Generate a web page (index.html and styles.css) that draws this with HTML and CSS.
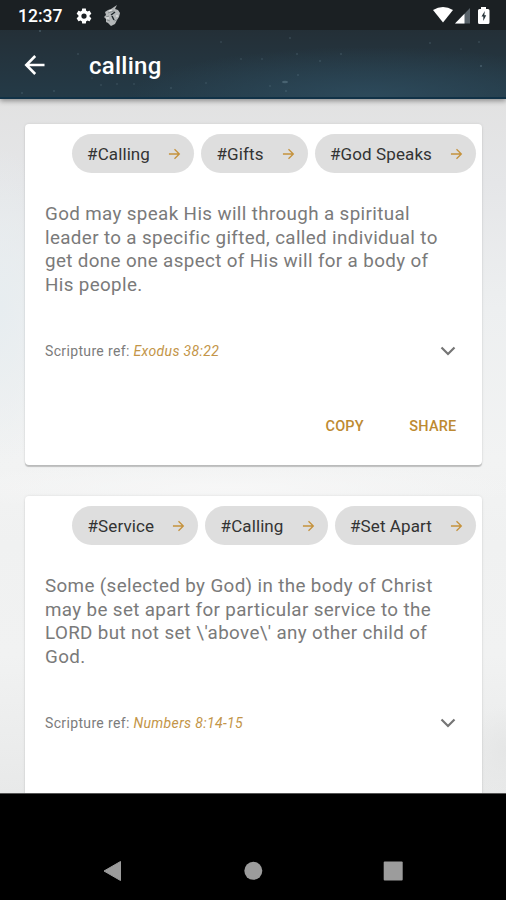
FILE: index.html
```html
<!DOCTYPE html>
<html lang="en">
<head>
<meta charset="utf-8">
<title>calling</title>
<link rel="stylesheet" href="styles.css">
</head>
<body>
<svg class="defs" width="0" height="0" aria-hidden="true">
  <symbol id="arrow" viewBox="0 0 14 14"><path d="M1 7H12M7 1.8L12.2 7L7 12.2" fill="none" stroke="currentColor" stroke-width="1.4"/></symbol>
  <symbol id="chevron" viewBox="0 0 16 10"><path d="M1.5 1.5L8 8L14.500 1.500" fill="none" stroke="currentColor" stroke-width="2.200"/></symbol>
</svg>
<div class="screen">
  <header class="top">
    <svg class="stars" viewBox="0 0 506 69" aria-hidden="true">
      <g fill="#7895a3" opacity=".4">
        <circle cx="40" cy="1" r="1"/><circle cx="78" cy="24" r=".8"/><circle cx="54" cy="61" r=".8"/><circle cx="22" cy="63" r=".8"/><circle cx="101" cy="55" r=".7"/><circle cx="117" cy="54" r=".7"/><circle cx="134" cy="54" r=".7"/><circle cx="92" cy="48" r=".6"/>
        <circle cx="171" cy="58" r=".8"/><circle cx="206" cy="53" r=".7"/><circle cx="221" cy="12" r=".7"/><circle cx="241" cy="29" r=".7"/><circle cx="262" cy="29" r=".7"/><circle cx="290" cy="8" r=".8"/><circle cx="297" cy="24" r=".8"/><circle cx="320" cy="31" r=".8"/><circle cx="341" cy="24" r=".8"/><circle cx="298" cy="45" r=".8"/><circle cx="270" cy="56" r=".7"/><circle cx="286" cy="61" r=".8"/><ellipse cx="285" cy="52" rx="3" ry="1.300"/>
        <circle cx="430" cy="13" r=".8"/><circle cx="461" cy="19" r=".6"/><circle cx="479" cy="12" r=".8"/><circle cx="471" cy="-1" r="1"/><circle cx="481" cy="36" r="1"/>
      </g>
    </svg>
    <div class="status">
      <span class="time">12:37</span>
      <svg class="gear" width="18" height="18" viewBox="0 0 24 24"><path fill="#fff" d="M19.430 12.980c.04-.32.07-.64.07-.98s-.03-.66-.07-.98l2.110-1.650c.19-.15.24-.42.12-.64l-2-3.460c-.12-.22-.39-.3-.61-.22l-2.490 1c-.52-.4-1.080-.73-1.690-.98l-.38-2.650C14.460 2.180 14.250 2 14 2h-4c-.25 0-.46.18-.49.42l-.38 2.650c-.61.25-1.170.59-1.690.98l-2.490-1c-.23-.09-.49 0-.61.22l-2 3.460c-.13.22-.07.49.12.64l2.110 1.650c-.04.32-.07.65-.07.98s.03.66.07.98l-2.110 1.650c-.19.15-.24.42-.12.64l2 3.460c.12.22.39.3.61.22l2.490-1c.52.4 1.080.73 1.690.98l.38 2.650c.03.24.24.42.49.42h4c.25 0 .46-.18.49-.42l.38-2.650c.61-.25 1.170-.59 1.690-.98l2.490 1c.23.09.49 0 .61-.22l2-3.460c.12-.22.07-.49-.12-.64zM12 15.500A3.500 3.500 0 1 1 12 8.500a3.500 3.500 0 0 1 0 7z"/></svg>
      <svg class="debug" width="18" height="22" viewBox="0 0 18 22">
        <path d="M2 7L5 5L8 4L14 0L12 4L15 5L17 8L16 12L14 15L12 19L8 21L5 18L3 17L3 14L1 12L3 10Z" fill="#b5b8b9"/>
        <path d="M5 8L11 6M3 12L6 11M4 15L7 16M11 16L14 15" stroke="#7a8082" stroke-width=".8"/>
        <path d="M12 7L8 10M9 11L11 15" fill="none" stroke="#22292d" stroke-width="1.500"/>
        <path d="M6 6L9 5M3 13L6 13M13 11L15 11" stroke="#eee" stroke-width="1"/>
      </svg>
      <span class="grow"></span>
      <svg width="60" height="20" viewBox="0 0 60 20">
        <path d="M1 4Q11 -2 21 4L11 16.500Z" fill="#fff"/>
        <path d="M23 17.500L38 2V17.500Z" fill="#59636a"/><path d="M23 17.500L32.500 7.700V17.500Z" fill="#fff"/>
        <path d="M49 1H54V3H56Q57.500 3 57.500 4.500V16.500Q57.500 18 56 18H47.500Q46 18 46 16.500V4.500Q46 3 47.500 3H49Z" fill="#fff"/>
        <path d="M52.800 5L49.500 10.500H51.300V15L54.200 9.300H52.300Z" fill="#263238"/>
      </svg>
    </div>
    <div class="bar">
      <svg width="22" height="22" viewBox="0 0 22 22"><path d="M20.500 11H3M11.200 2L2.300 11L11.200 20" fill="none" stroke="#fff" stroke-width="2.600"/></svg>
      <h1>calling</h1>
    </div>
  </header>
  <main>
    <article class="card">
      <div class="chips">
        <a class="chip">#Calling<svg><use href="#arrow"/></svg></a>
        <a class="chip">#Gifts<svg><use href="#arrow"/></svg></a>
        <a class="chip">#God Speaks<svg><use href="#arrow"/></svg></a>
      </div>
      <p class="text">God may speak His will through a spiritual<br>leader to a specific gifted, called individual to<br>get done one aspect of His will for a body of<br>His people.</p>
      <div class="ref"><span>Scripture ref: <em>Exodus 38:22</em></span><svg><use href="#chevron"/></svg></div>
      <div class="actions"><span>COPY</span><span>SHARE</span></div>
    </article>
    <article class="card">
      <div class="chips">
        <a class="chip">#Service<svg><use href="#arrow"/></svg></a>
        <a class="chip">#Calling<svg><use href="#arrow"/></svg></a>
        <a class="chip">#Set Apart<svg><use href="#arrow"/></svg></a>
      </div>
      <p class="text">Some (selected by God) in the body of Christ<br>may be set apart for particular service to the<br>LORD but not set \'above\' any other child of<br>God.</p>
      <div class="ref"><span>Scripture ref: <em>Numbers 8:14-15</em></span><svg><use href="#chevron"/></svg></div>
    </article>
  </main>
  <nav>
    <svg width="20" height="22" viewBox="0 0 20 22"><path d="M1 11L17.500 1.500V20.500Z" fill="#9c9c9c" stroke="#9c9c9c" stroke-linejoin="round"/></svg>
    <svg width="20" height="22" viewBox="0 0 20 22"><circle cx="10.300" cy="10.800" r="9" fill="#9c9c9c"/></svg>
    <svg width="20" height="22" viewBox="0 0 20 22"><rect x=".7" y="1.500" width="19" height="19" rx="1" fill="#9c9c9c"/></svg>
  </nav>
</div>
</body>
</html>
```
FILE: styles.css
```css
* { box-sizing: border-box; }
body { margin: 0; font-family: Roboto, sans-serif; }
.defs { position: absolute; }
.screen { width: 506px; height: 900px; display: flex; flex-direction: column; overflow: hidden; }
.top {
  position: relative;
  z-index: 1;
  height: 99px;
  flex: none;
  color: #fff;
  border-bottom: 2px solid #113247;
  background: radial-gradient(ellipse 240px 50px at 73% 100%, #2d4a5b 0%, rgba(45, 74, 91, 0) 100%), linear-gradient(#20282e, #243038 35%, #243a47 100%);
  box-shadow: 0 2px 5px rgba(0, 0, 0, .38);
}
.stars { position: absolute; left: 0; top: 30px; width: 506px; height: 69px; }
.status { height: 30px; display: flex; align-items: center; padding: 1px 14px 0 18px; background: #1b2023; }
.time { font-size: 17.500px; font-weight: 500; width: 57px; }
.debug { margin-left: 10px; }
.grow { flex: 1; }
.bar { height: 69px; display: flex; align-items: center; padding: 0 0 0 24px; gap: 43px; }
h1 { margin: 0; font-size: 24px; font-weight: 500; line-height: 30px; letter-spacing: .25px; padding-top: 2px; }
main {
  flex: 1;
  min-height: 0;
  overflow: hidden;
  padding: 25px 24px 0 25px;
  display: flex;
  flex-direction: column;
  gap: 31px;
  background:
    radial-gradient(ellipse 60px 160px at 0% 30%, #e7edf0, rgba(231, 237, 240, 0)),
    radial-gradient(ellipse 300px 25px at 45% 56%, #f7f7f7, rgba(247, 247, 247, 0)),
    radial-gradient(ellipse 40px 45px at 100% 94%, #e5e6e6, rgba(229, 230, 230, 0)),
    linear-gradient(#e2e2e2, #e5e6e8 12%, #edeff0 30%, #f2f3f3 52%, #f0f1f1 64%, #f1f2f2 80%, #e8e9e9);
}
.card {
  flex: none;
  height: 341px;
  background: #fff;
  border-radius: 4px;
  box-shadow: 0 2px 1px rgba(0, 0, 0, .2), 0 0 3px rgba(0, 0, 0, .1);
  padding-top: 10px;
}
.chips { display: flex; justify-content: flex-end; gap: 7px; padding-right: 6px; }
.chip {
  height: 39px;
  border-radius: 20px;
  background: #dedede;
  display: flex;
  align-items: center;
  padding: 0 13px 0 15.500px;
  gap: 18px;
  font-size: 17px;
  letter-spacing: .1px;
  color: #333;
}
.chip svg { width: 13px; height: 14px; color: #c5923c; }
.text { margin: 30px 0 0 20px; font-size: 18.800px; line-height: 23.500px; letter-spacing: .37px; color: #7a7a7a; white-space: nowrap; }
.ref {
  height: 24px;
  margin: 42px 26px 0 20px;
  display: flex;
  align-items: center;
  justify-content: space-between;
  font-size: 14px;
  letter-spacing: .35px;
  color: #7c7c7c;
}
.ref em { color: #c39548; }
.ref svg { width: 16px; height: 10px; color: #757575; }
.actions {
  display: flex;
  justify-content: flex-end;
  gap: 45.500px;
  padding: 54px 25.500px 0 0;
  font-size: 14.500px;
  line-height: 20px;
  font-weight: 500;
  letter-spacing: .2px;
  color: #bd8a32;
}
nav {
  flex: none;
  height: 107px;
  background: #000;
  border-top: 1px solid #555;
  display: flex;
  justify-content: space-between;
  padding: 66px 103px 0;
}
```
